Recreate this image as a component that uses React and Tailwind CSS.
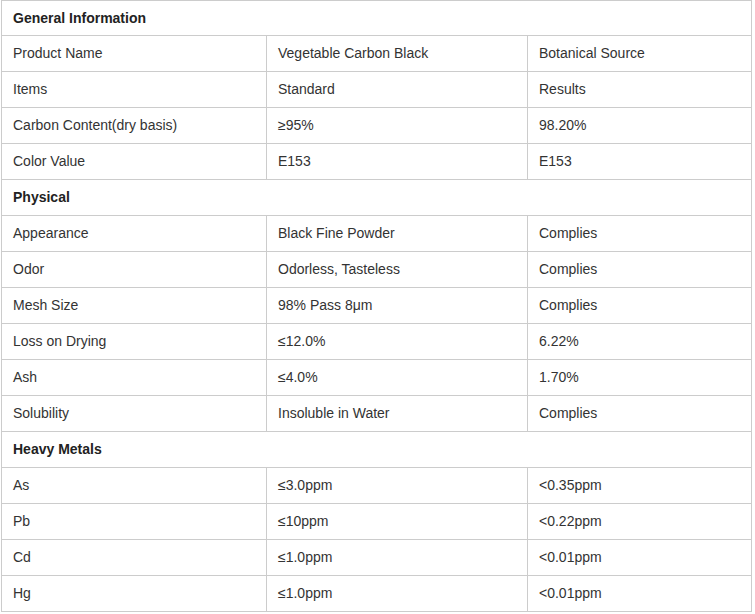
import React from 'react';

const sections = [
    {
        title: 'General Information',
        rows: [
            ['Product Name', 'Vegetable Carbon Black', 'Botanical Source'],
            ['Items', 'Standard', 'Results'],
            ['Carbon Content(dry basis)', '≥95%', '98.20%'],
            ['Color Value', 'E153', 'E153'],
        ],
    },
    {
        title: 'Physical',
        rows: [
            ['Appearance', 'Black Fine Powder', 'Complies'],
            ['Odor', 'Odorless, Tasteless', 'Complies'],
            ['Mesh Size', '98% Pass 8μm', 'Complies'],
            ['Loss on Drying', '≤12.0%', '6.22%'],
            ['Ash', '≤4.0%', '1.70%'],
            ['Solubility', 'Insoluble in Water', 'Complies'],
        ],
    },
    {
        title: 'Heavy Metals',
        rows: [
            ['As', '≤3.0ppm', '<0.35ppm'],
            ['Pb', '≤10ppm', '<0.22ppm'],
            ['Cd', '≤1.0ppm', '<0.01ppm'],
            ['Hg', '≤1.0ppm', '<0.01ppm'],
        ],
    },
];

const App = () => {
    return (
        <div className="min-h-screen bg-white" style={{ fontFamily: '"Liberation Sans", Arial, sans-serif' }}>
            <table className="ml-[1px] w-[751px] table-fixed border-collapse border border-[#bbb] text-[14px] text-[#333]">
                <colgroup>
                    <col className="w-[265px]" />
                    <col className="w-[261px]" />
                    <col />
                </colgroup>
                <tbody>
                    {sections.map((section, s) => (
                        <React.Fragment key={section.title}>
                            <tr className={s === 0 ? 'h-[35px]' : 'h-[36px]'}>
                                <td colSpan={3} className="border border-[#ccc] px-[11px] font-bold text-[#222]">
                                    {section.title}
                                </td>
                            </tr>
                            {section.rows.map((row) => (
                                <tr key={row[0]} className="h-[36px]">
                                    {row.map((cell, i) => (
                                        <td key={i} className="border border-[#ccc] px-[11px]">
                                            {cell}
                                        </td>
                                    ))}
                                </tr>
                            ))}
                        </React.Fragment>
                    ))}
                </tbody>
            </table>
        </div>
    );
};

export default App;
